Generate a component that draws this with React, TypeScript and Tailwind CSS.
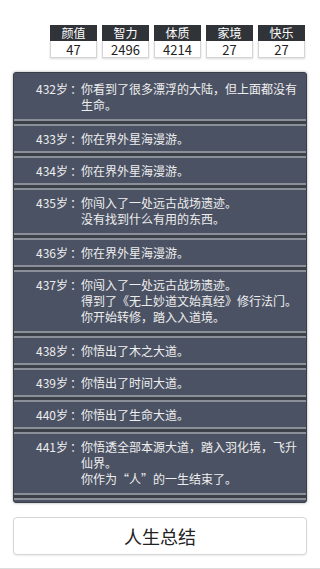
import React from 'react';

const stats = [
  { label: '颜值', value: '47' },
  { label: '智力', value: '2496' },
  { label: '体质', value: '4214' },
  { label: '家境', value: '27' },
  { label: '快乐', value: '27' },
];

const events: { age: number; lines: string[] }[] = [
  { age: 432, lines: ['你看到了很多漂浮的大陆，但上面都没有生命。'] },
  { age: 433, lines: ['你在界外星海漫游。'] },
  { age: 434, lines: ['你在界外星海漫游。'] },
  { age: 435, lines: ['你闯入了一处远古战场遗迹。', '没有找到什么有用的东西。'] },
  { age: 436, lines: ['你在界外星海漫游。'] },
  {
    age: 437,
    lines: ['你闯入了一处远古战场遗迹。', '得到了《无上妙道文始真经》修行法门。', '你开始转修，踏入入道境。'],
  },
  { age: 438, lines: ['你悟出了木之大道。'] },
  { age: 439, lines: ['你悟出了时间大道。'] },
  { age: 440, lines: ['你悟出了生命大道。'] },
  { age: 441, lines: ['你悟透全部本源大道，踏入羽化境，飞升仙界。', '你作为“人”的一生结束了。'] },
];

const font = { fontFamily: '"Noto Sans CJK SC", "Noto Sans", sans-serif' };

function StatBox({ label, value }: { label: string; value: string }) {
  return (
    <div className="w-[47px] flex flex-col">
      <div className="h-[16px] bg-[#303338] text-white text-[12px] leading-none flex items-center justify-center">
        {label}
      </div>
      <div className="h-[17px] bg-white border border-t-0 border-[#d4d4d4] shadow-[0_1px_2px_rgba(0,0,0,0.15)] text-[#222] text-[13px] leading-none flex items-center justify-center">
        {value}
      </div>
    </div>
  );
}

function Separator() {
  return (
    <div className="flex flex-col">
      <div className="h-[2px] bg-[#8a8f98]" />
      <div className="h-[3px] bg-[#3c4049]" />
      <div className="h-[2px] bg-[#8a8f98]" />
    </div>
  );
}

function EventRow({ age, lines }: { age: number; lines: string[] }) {
  const multi = lines.length > 1 || lines[0].length > 18;
  return (
    <>
      <div className={`flex pl-[22px] pr-[6px] pt-[5px] ${multi ? 'pb-[6px]' : 'pb-[4px]'}`}>
        <div className="w-[45px] shrink-0 text-[12px] leading-[16px] text-[#eeeeee] whitespace-nowrap">
          {age}岁<span className="relative left-[2px]">：</span>
        </div>
        <div className="w-[218px] text-[12px] leading-[16px] text-[#eeeeee]">
          {lines.map((l, i) => (
            <div key={i}>{l}</div>
          ))}
        </div>
      </div>
      <Separator />
    </>
  );
}

export default function App() {
  return (
    <div className="w-[320px] h-[569px] bg-white flex flex-col border-b border-[#dcdcdc]" style={font}>
      <div className="flex justify-end gap-[5px] pr-[15px] pt-[25px]">
        {stats.map((s) => (
          <StatBox key={s.label} label={s.label} value={s.value} />
        ))}
      </div>

      <div className="mx-[13px] mt-[14px] bg-[#4b5264] border border-[#3a3e47] rounded-[3px] pt-[3px] pb-[2px] shadow-[0_0_3px_rgba(0,0,0,0.35)]">
        {events.map((e) => (
          <EventRow key={e.age} age={e.age} lines={e.lines} />
        ))}
      </div>

      <button className="mx-[13px] mt-[14px] h-[38px] bg-white border border-[#d6d6d6] rounded-[4px] shadow-[0_1px_2px_rgba(0,0,0,0.08)] text-[18px] text-[#222] leading-none">
        人生总结
      </button>
    </div>
  );
}
